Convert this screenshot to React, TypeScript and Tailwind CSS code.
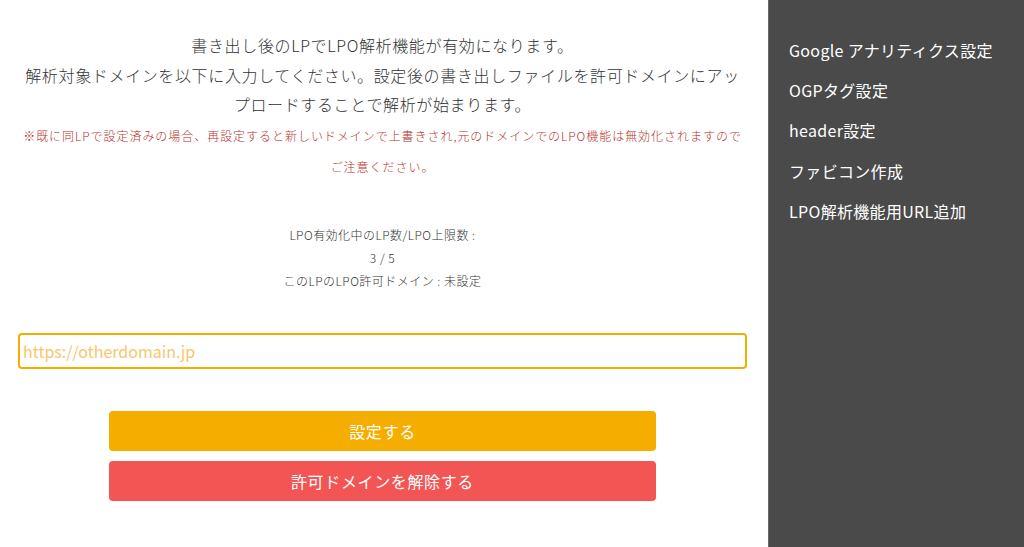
import React from 'react';

const menu = [
  'Google アナリティクス設定',
  'OGPタグ設定',
  'header設定',
  'ファビコン作成',
  'LPO解析機能用URL追加',
];

const App = () => {
  return (
    <div
      className="flex w-[1024px] h-[547px] overflow-hidden bg-white text-[#333] font-light"
      style={{ fontFamily: '"Noto Sans CJK JP", "Noto Sans", sans-serif' }}
    >
      {/* Main */}
      <main className="w-[768px] pl-[18px] pr-[21px] pt-[31px]">
        <div className="text-center text-[16px] leading-[29.5px] tracking-[0.04em]">
          <p>書き出し後のLPでLPO解析機能が有効になります。</p>
          <p>
            解析対象ドメインを以下に入力してください。設定後の書き出しファイルを許可ドメインにアップロードすることで解析が始まります。
          </p>
        </div>
        <p className="text-center text-[12px] leading-[31px] tracking-[0.08em] text-[#b8322c] px-[4px]">
          ※既に同LPで設定済みの場合、再設定すると新しいドメインで上書きされ,元のドメインでのLPO機能は無効化されますのでご注意ください。
        </p>

        <div className="mt-[41px] text-center text-[12px] leading-[23px] tracking-[0.04em]">
          <p>LPO有効化中のLP数/LPO上限数 :</p>
          <p>3 / 5</p>
          <p>このLPのLPO許可ドメイン : 未設定</p>
        </div>

        <input
          type="text"
          placeholder="https://otherdomain.jp"
          className="mt-[41px] block w-full h-[36px] px-[3px] border-2 border-[#f5ae00] rounded-[4px] text-[16px] font-normal outline-none placeholder:text-[#f8c66a]"
        />

        <div className="mt-[42px] mx-auto w-3/4 flex flex-col gap-[10px]">
          <button className="h-[40px] rounded-[4px] bg-[#f5ae00] text-white text-[16px] font-normal tracking-[0.04em]">
            設定する
          </button>
          <button className="h-[40px] rounded-[4px] bg-[#f35555] text-white text-[16px] font-normal tracking-[0.04em]">
            許可ドメインを解除する
          </button>
        </div>
      </main>

      {/* Sidebar */}
      <aside className="flex-1 bg-[#4a4a4a] border-l border-[#6a6a6a] pl-[20px] pt-[29.5px] text-white text-[16px] font-normal tracking-[0.02em]">
        {menu.map((item) => (
          <div key={item} className="h-[40.4px] flex items-center">
            {item}
          </div>
        ))}
      </aside>
    </div>
  );
};

export default App;
